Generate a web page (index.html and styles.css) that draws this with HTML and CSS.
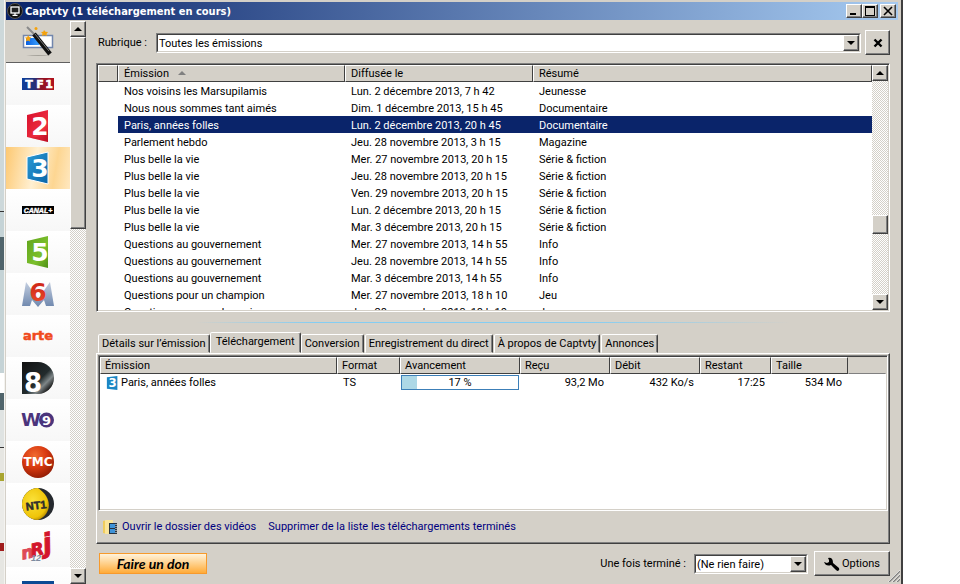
FILE: index.html
```html
<!DOCTYPE html>
<html lang="fr">
<head>
  <meta charset="UTF-8">
  <meta name="viewport" content="width=device-width, initial-scale=1.0">
  <title>Captvty</title>
  <link rel="stylesheet" href="styles.css">
</head>
<body>
  <div class="desktop"></div>
  <div class="window">
    <header class="titlebar">
      <svg class="app-icon" viewBox="0 0 16 16" width="16" height="16">
        <circle cx="8" cy="8" r="7.5" fill="#111" stroke="#555"/>
        <rect x="4" y="4" width="8" height="6" fill="#222" stroke="#fff" stroke-width="1.3"/>
        <path d="M8 10v2M5.5 12.3h5" stroke="#fff" stroke-width="1.3"/>
      </svg>
      <h1>Captvty (1 téléchargement en cours)</h1>
      <div class="win-buttons">
        <button type="button" aria-label="Réduire"><svg viewBox="0 0 12 10" width="12" height="10"><path d="M2 7h6v2H2z"/></svg></button>
        <button type="button" aria-label="Agrandir"><svg viewBox="0 0 12 10" width="12" height="10"><path d="M1 0h10v10H1zM2 2v7h8V2z" fill-rule="evenodd"/></svg></button>
        <button type="button" class="close" aria-label="Fermer"><svg viewBox="0 0 12 10" width="12" height="10"><path d="M2 1l8 8M10 1l-8 8" stroke="#000" stroke-width="1.6"/></svg></button>
      </div>
    </header>

    <div class="content">
      <nav class="sidebar">
        <div class="channels">
          <button type="button" class="channel tools" aria-label="Outils">
            <svg viewBox="0 0 34 32" width="34" height="32">
              <defs>
                <linearGradient id="wandBlue" x2="1"><stop offset="0" stop-color="#0a5fe0"/><stop offset="1" stop-color="#3aa0ff"/></linearGradient>
              </defs>
              <path d="M5 30q12-2 25 0z" fill="#a5a29a"/>
              <rect x="2.500" y="9.500" width="29" height="12" fill="#fff" stroke="#7286ad" stroke-width="1.500"/>
              <rect x="5" y="12" width="13" height="7" fill="url(#wandBlue)"/>
              <path d="M6 1l9 9" stroke="#8a8a8a" stroke-width="2"/>
              <path d="M13 8l16 20" stroke="#111" stroke-width="4.500"/>
              <path d="M14 8l14 17" stroke="#777" stroke-width="1"/>
              <g fill="#f5a20c">
                <circle cx="15" cy="2.500" r="1.500"/>
                <path d="M23 4l1.500 1.800L27 6l-1.500 2L26 10l-2.500-1-2.500 1 .5-2.500L20 6l2.300-.3z"/>
                <path d="M7 9l1.300 2 2 .5-1.500 1.500.2 2.500L7 14.500l-2 1 .3-2.500L4 11.500l2.200-.3z"/>
              </g>
            </svg>
          </button>
          <button type="button" class="channel" aria-label="TF1">
            <svg viewBox="0 0 32 32" width="32" height="32">
              <defs><linearGradient id="tf1" x2="1"><stop offset="0" stop-color="#0b3f9c"/><stop offset=".4" stop-color="#253078"/><stop offset=".6" stop-color="#8c1226"/><stop offset="1" stop-color="#b3121c"/></linearGradient></defs>
              <rect y="10" width="32" height="12" fill="url(#tf1)"/>
              <g class="logo-text heavy" font-size="11" fill="#fff" stroke="#fff" stroke-width=".6" text-anchor="middle">
                <text x="7" y="20">T</text><text x="18" y="20">F</text><text x="27" y="20">1</text>
              </g>
            </svg>
          </button>
          <button type="button" class="channel" aria-label="France 2">
            <svg viewBox="0 0 32 32" width="32" height="32">
              <defs><linearGradient id="f2" x2="1" y2="1"><stop offset="0" stop-color="#d80f2c"/><stop offset=".7" stop-color="#ee3040"/><stop offset="1" stop-color="#c00d24"/></linearGradient></defs>
              <path d="M5 5l21-5v32L5 27z" fill="url(#f2)"/>
              <path d="M5 27q10 3 21-7v12z" fill="#b80d24" opacity=".4"/>
              <text x="18" y="25" class="logo-text heavy" font-size="25" text-anchor="middle" fill="#fff">2</text>
            </svg>
          </button>
          <button type="button" class="channel active" aria-label="France 3">
            <svg viewBox="0 0 32 32" width="32" height="32">
              <defs><linearGradient id="f3" x2="1" y2="1"><stop offset="0" stop-color="#2a9bd6"/><stop offset="1" stop-color="#0a65a8"/></linearGradient></defs>
              <path d="M5 5l21-5v32L5 27z" fill="url(#f3)" stroke="#fff"/>
              <text x="18" y="25" class="logo-text heavy" font-size="25" text-anchor="middle" fill="#fff">3</text>
            </svg>
          </button>
          <button type="button" class="channel" aria-label="Canal+">
            <svg viewBox="0 0 32 32" width="32" height="32">
              <rect y="12" width="32" height="8" fill="#000"/>
              <text x="16" y="19" class="logo-text" font-size="7" font-style="italic" text-anchor="middle" fill="#fff" stroke="#fff" stroke-width=".4">CANAL+</text>
            </svg>
          </button>
          <button type="button" class="channel" aria-label="France 5">
            <svg viewBox="0 0 32 32" width="32" height="32">
              <defs><linearGradient id="f5" x2="1" y2="1"><stop offset="0" stop-color="#5fa31c"/><stop offset=".6" stop-color="#7cc02c"/><stop offset="1" stop-color="#4f9016"/></linearGradient></defs>
              <path d="M5 5l21-5v32L5 27z" fill="url(#f5)"/>
              <text x="18" y="25" class="logo-text heavy" font-size="25" text-anchor="middle" fill="#fff">5</text>
            </svg>
          </button>
          <button type="button" class="channel" aria-label="M6">
            <svg viewBox="0 0 32 32" width="32" height="32">
              <defs>
                <linearGradient id="m6" x2="0" y2="1"><stop offset="0" stop-color="#c3cee0"/><stop offset="1" stop-color="#6e87ad"/></linearGradient>
                <linearGradient id="m6red" x2="0" y2="1"><stop offset="0" stop-color="#c81e12"/><stop offset="1" stop-color="#f0502c"/></linearGradient>
              </defs>
              <path d="M4 4l12 17L28 4l4 24h-8l-2-6-6 7-6-7-2 6H0z" fill="url(#m6)"/>
              <text x="16" y="23" class="logo-text heavy" font-size="25" text-anchor="middle" fill="url(#m6red)">6</text>
            </svg>
          </button>
          <button type="button" class="channel" aria-label="Arte">
            <svg viewBox="0 0 32 32" width="32" height="32">
              <text x="16" y="20" class="logo-text heavy" font-size="13" text-anchor="middle" fill="#f04a1d" stroke="#f04a1d" stroke-width=".5">arte</text>
            </svg>
          </button>
          <button type="button" class="channel" aria-label="D8">
            <svg viewBox="0 0 32 32" width="32" height="32">
              <defs><linearGradient id="d8" x2="1" y2="1"><stop offset="0" stop-color="#111"/><stop offset=".55" stop-color="#222b2d"/><stop offset=".7" stop-color="#7e8688"/><stop offset=".85" stop-color="#1a1a1a"/></linearGradient></defs>
              <path d="M0 0h16a16 16 0 0 1 0 32H0z" fill="url(#d8)"/>
              <text x="11" y="30" class="logo-text heavy" font-size="26" text-anchor="middle" fill="#fff">8</text>
            </svg>
          </button>
          <button type="button" class="channel" aria-label="W9">
            <svg viewBox="0 0 32 32" width="32" height="32">
              <text x="9" y="22" class="logo-text heavy" font-size="18" text-anchor="middle" fill="#4b347c">W</text>
              <circle cx="24.500" cy="16" r="7.500" fill="#4b347c"/>
              <text x="24.500" y="21" class="logo-text heavy" font-size="13" text-anchor="middle" fill="#fff">9</text>
            </svg>
          </button>
          <button type="button" class="channel" aria-label="TMC">
            <svg viewBox="0 0 32 32" width="32" height="32">
              <defs><radialGradient id="tmc" cx=".4" cy=".3" r=".75"><stop offset="0" stop-color="#f06a30"/><stop offset=".5" stop-color="#d93a10"/><stop offset="1" stop-color="#8c1a04"/></radialGradient></defs>
              <circle cx="16" cy="16" r="16" fill="url(#tmc)"/>
              <text x="16" y="20" class="logo-text heavy" font-size="12" text-anchor="middle" fill="#fff">TMC</text>
            </svg>
          </button>
          <button type="button" class="channel" aria-label="NT1">
            <svg viewBox="0 0 32 32" width="32" height="32">
              <defs><radialGradient id="nt1" cx=".4" cy=".4" r=".65"><stop offset="0" stop-color="#fbe23a"/><stop offset=".8" stop-color="#efc408"/><stop offset="1" stop-color="#b88c00"/></radialGradient></defs>
              <circle cx="16" cy="16" r="16" fill="#25292e"/>
              <path d="M16 0a16 16 0 1 0 0 32c14-6 15-22 0-32z" fill="url(#nt1)"/>
              <text x="14" y="21" class="logo-text" font-size="11" text-anchor="middle" transform="rotate(-7 16 16)" fill="#2d2d2d" stroke="#2d2d2d" stroke-width=".5">NT1</text>
            </svg>
          </button>
          <button type="button" class="channel" aria-label="NRJ 12">
            <svg viewBox="0 0 32 32" width="32" height="32">
              <g class="logo-text heavy" fill="#d3162c" stroke="#d3162c" font-style="italic" transform="rotate(-12 16 16)">
                <text x="-2" y="26" font-size="17" fill="#de4a58" stroke="#de4a58">n</text>
                <text x="8" y="25" font-size="17">R</text>
                <text x="21" y="24" font-size="26">j</text>
              </g>
              <text x="9" y="31" class="logo-text" font-size="9" font-style="italic" fill="#7d8ba0">12</text>
            </svg>
          </button>
          <button type="button" class="channel" aria-label="Chaîne suivante">
            <svg viewBox="0 0 32 32" width="32" height="32"><rect y="9" width="32" height="14" fill="#0b4a94"/></svg>
          </button>
        </div>
        <div class="scrollbar">
          <button type="button" class="arrow up" aria-label="Monter"></button>
          <div class="thumb tall"></div>
          <div class="track"></div>
          <button type="button" class="arrow down" aria-label="Descendre"></button>
        </div>
      </nav>

      <main class="main">
        <div class="filter">
          <label for="rubrique">Rubrique :</label>
          <div class="combo grow">
            <select id="rubrique"><option>Toutes les émissions</option></select>
            <span class="combo-arrow"></span>
          </div>
          <button type="button" class="btn clear" aria-label="Effacer">
            <svg viewBox="0 0 10 10" width="10" height="10"><path d="M1.500 1.500l7 7M8.500 1.500l-7 7" stroke="#000" stroke-width="2.400"/></svg>
          </button>
        </div>

        <div class="list shows">
          <div class="list-view">
            <table>
              <colgroup><col class="c-mark"><col class="c-show"><col class="c-date"><col></colgroup>
              <thead>
                <tr><th></th><th>Émission <span class="sort"></span></th><th>Diffusée le</th><th>Résumé</th></tr>
              </thead>
              <tbody>
                <tr><td></td><td>Nos voisins les Marsupilamis</td><td>Lun. 2 décembre 2013, 7 h 42</td><td>Jeunesse</td></tr>
                <tr><td></td><td>Nous nous sommes tant aimés</td><td>Dim. 1 décembre 2013, 15 h 45</td><td>Documentaire</td></tr>
                <tr class="selected"><td></td><td>Paris, années folles</td><td>Lun. 2 décembre 2013, 20 h 45</td><td>Documentaire</td></tr>
                <tr><td></td><td>Parlement hebdo</td><td>Jeu. 28 novembre 2013, 3 h 15</td><td>Magazine</td></tr>
                <tr><td></td><td>Plus belle la vie</td><td>Mer. 27 novembre 2013, 20 h 15</td><td>Série &amp; fiction</td></tr>
                <tr><td></td><td>Plus belle la vie</td><td>Jeu. 28 novembre 2013, 20 h 15</td><td>Série &amp; fiction</td></tr>
                <tr><td></td><td>Plus belle la vie</td><td>Ven. 29 novembre 2013, 20 h 15</td><td>Série &amp; fiction</td></tr>
                <tr><td></td><td>Plus belle la vie</td><td>Lun. 2 décembre 2013, 20 h 15</td><td>Série &amp; fiction</td></tr>
                <tr><td></td><td>Plus belle la vie</td><td>Mar. 3 décembre 2013, 20 h 15</td><td>Série &amp; fiction</td></tr>
                <tr><td></td><td>Questions au gouvernement</td><td>Mer. 27 novembre 2013, 14 h 55</td><td>Info</td></tr>
                <tr><td></td><td>Questions au gouvernement</td><td>Jeu. 28 novembre 2013, 14 h 55</td><td>Info</td></tr>
                <tr><td></td><td>Questions au gouvernement</td><td>Mar. 3 décembre 2013, 14 h 55</td><td>Info</td></tr>
                <tr><td></td><td>Questions pour un champion</td><td>Mer. 27 novembre 2013, 18 h 10</td><td>Jeu</td></tr>
                <tr><td></td><td>Questions pour un champion</td><td>Jeu. 28 novembre 2013, 18 h 10</td><td>Jeu</td></tr>
              </tbody>
            </table>
          </div>
          <div class="scrollbar">
            <button type="button" class="arrow up" aria-label="Monter"></button>
            <div class="track before"></div>
            <div class="thumb"></div>
            <div class="track after"></div>
            <button type="button" class="arrow down" aria-label="Descendre"></button>
          </div>
        </div>

        <div class="splitter"></div>

        <div class="tabs" role="tablist">
          <button type="button" role="tab">Détails sur l’émission</button>
          <button type="button" role="tab" class="current" aria-selected="true">Téléchargement</button>
          <button type="button" role="tab">Conversion</button>
          <button type="button" role="tab">Enregistrement du direct</button>
          <button type="button" role="tab">À propos de Captvty</button>
          <button type="button" role="tab">Annonces</button>
        </div>

        <section class="panel">
          <div class="list downloads">
            <table>
              <colgroup><col class="d-name"><col class="d-format"><col class="d-progress"><col class="d-size"><col class="d-size"><col class="d-left"><col class="d-total"><col></colgroup>
              <thead>
                <tr><th>Émission</th><th>Format</th><th>Avancement</th><th>Reçu</th><th>Débit</th><th>Restant</th><th>Taille</th><th class="rest"></th></tr>
              </thead>
              <tbody>
                <tr>
                  <td>
                    <div class="show-name">
                      <svg viewBox="0 0 32 32" width="14" height="14"><path d="M2 3l24-3v32L2 29z" fill="#1b86c4"/><text x="15" y="26" class="logo-text heavy" font-size="27" text-anchor="middle" fill="#fff">3</text></svg>
                      Paris, années folles
                    </div>
                  </td>
                  <td>TS</td>
                  <td class="progress-cell"><div class="progress"><div class="bar" style="width: 13%"></div><span>17 %</span></div></td>
                  <td class="num">93,2 Mo</td>
                  <td class="num">432 Ko/s</td>
                  <td class="num">17:25</td>
                  <td class="num">534 Mo</td>
                  <td></td>
                </tr>
              </tbody>
            </table>
          </div>
          <div class="actions">
            <svg viewBox="0 0 16 16" width="16" height="16">
              <path d="M1 2l5-1v14l-5-1z" fill="#f0cc5c"/>
              <path d="M3 1h8v14H3z" fill="#fbe59a"/>
              <rect x="7" y="4" width="8" height="11" fill="#27333f"/>
              <path d="M8 5h5v4H8zM8 10h5v4H8z" fill="#3f93d8"/>
              <path d="M14 5v10" stroke="#fff" stroke-dasharray="1 1"/>
            </svg>
            <a href="#">Ouvrir le dossier des vidéos</a>
            <a href="#">Supprimer de la liste les téléchargements terminés</a>
          </div>
        </section>

        <footer class="footer">
          <button type="button" class="donate">Faire un don</button>
          <label for="after">Une fois terminé :</label>
          <div class="combo">
            <select id="after"><option>(Ne rien faire)</option></select>
            <span class="combo-arrow"></span>
          </div>
          <button type="button" class="btn options">
            <svg viewBox="0 0 16 14" width="16" height="14"><path d="M4 1q5-1 5 5l6 5q1 2-1 3-1 0-2-1L7 8Q2 10 0 5l3 1 2-1 0-2z"/></svg>
            Options
          </button>
        </footer>
        <svg class="grip" viewBox="0 0 12 12" width="12" height="12">
          <path d="M1 12L12 1M5 12l7-7M9 12l3-3" stroke="#808080" stroke-width="1.500"/>
          <path d="M0 12L12 0M4 12l8-8M8 12l4-4" stroke="#fff" stroke-width=".6"/>
        </svg>
      </main>
    </div>
  </div>
</body>
</html>
```

FILE: styles.css
```css
* {
  box-sizing: border-box;
  margin: 0;
  padding: 0;
}
body {
  display: flex;
  height: 100vh;
  padding-right: 57px;
  overflow: hidden;
  background-color: #fff;
  font-family: Roboto, "Liberation Sans", sans-serif;
  font-size: 11px;
  line-height: 17px;
  color: #000;
}
button, select {
  font: inherit;
  color: inherit;
}
.desktop {
  width: 4px;
  background: linear-gradient(#cdd8da 211px, #333 211px, #333 212px, #c5d3d6 212px, #c5d3d6 237px, #50646b 237px, #50646b 270px, #c5d3d6 270px, #c5d3d6 373px, #fff 373px, #fff 393px, #50646b 393px, #50646b 410px, #dfe3e2 410px, #dfe3e2 447px, #333 447px, #333 448px, #e6e6e2 448px, #e6e6e2 473px, #a9a530 473px, #a9a530 481px, #ebebe8 481px, #ebebe8 543px, #a01c1c 543px, #a01c1c 551px, #e6e6e2 551px);
}
.window {
  flex: 1;
  display: flex;
  flex-direction: column;
  min-width: 0;
  padding-top: 2px;
  background-color: #d4d0c8;
  border-left: 1px solid #f4f3f0;
  border-right: 2px solid #404040;
}

/* Title bar */
.titlebar {
  display: flex;
  align-items: center;
  height: 18px;
  margin: 0 3px 0 1px;
  padding: 0 2px 0 1px;
  background: linear-gradient(to right, #0a246a, #a6caf0);
  color: #fff;
}
.titlebar h1 {
  flex: 1;
  padding-left: 2px;
  font-family: "DejaVu Sans Condensed", "DejaVu Sans", sans-serif;
  font-size: 11px;
}
.win-buttons {
  display: flex;
}
.win-buttons button {
  display: flex;
  align-items: center;
  justify-content: center;
  width: 16px;
  height: 14px;
}
.win-buttons .close {
  margin-left: 2px;
}
.btn, .arrow, .thumb, .combo-arrow, .win-buttons button {
  background-color: #d4d0c8;
  border: 1px solid;
  border-color: #fff #404040 #404040 #fff;
  box-shadow: inset -1px -1px #808080;
}

.content {
  flex: 1;
  display: flex;
  min-height: 0;
  padding-top: 1px;
}

/* Channels */
.sidebar {
  display: flex;
  flex-shrink: 0;
  width: 81px;
  padding-left: 1px;
}
.channels {
  flex: 1;
  overflow: hidden;
}
.channel {
  display: flex;
  align-items: center;
  justify-content: center;
  width: 100%;
  height: 42px;
  border: none;
  background: linear-gradient(#fff, #f7f7f7);
}
.channel svg {
  overflow: visible;
}
.channel.tools {
  background: #d4d0c8;
  border-bottom: 1px solid #606060;
}
.channel.active {
  background: linear-gradient(100deg, #fdc871, #fff0d2 45%, #fdd692 75%, #ffe8c0);
}
.logo-text {
  font-family: "Liberation Sans", sans-serif;
  font-weight: bold;
}
.logo-text.heavy {
  font-family: "DejaVu Sans", sans-serif;
}

/* Scroll bars */
.scrollbar {
  display: flex;
  flex-direction: column;
  flex-shrink: 0;
  width: 16px;
}
.arrow {
  display: flex;
  align-items: center;
  justify-content: center;
  height: 16px;
}
.arrow::before, .combo-arrow::before {
  content: "";
  border: 4px solid transparent;
  border-bottom-width: 0;
  border-top-color: #000;
}
.arrow.up::before {
  border-width: 0 4px 4px;
  border-bottom-color: #000;
}
.thumb {
  height: 19px;
}
.thumb.tall {
  height: 192px;
}
.track {
  flex: 1;
  background: repeating-conic-gradient(#d4d0c8 0 25%, #fff 0 50%) 0 0 / 2px 2px;
}
.track.before {
  flex: 134;
}
.track.after {
  flex: 60;
}

/* Main area */
.main {
  position: relative;
  flex: 1;
  display: flex;
  flex-direction: column;
  min-width: 0;
  padding: 9px 11px 8px 10px;
}
.filter {
  display: flex;
  align-items: center;
  height: 25px;
  padding-left: 2px;
}
.filter label {
  width: 58px;
}
.combo {
  position: relative;
  width: 114px;
  height: 20px;
  border: 1px solid;
  border-color: #808080 #fff #fff #808080;
}
.combo.grow {
  flex: 1;
}
.combo select {
  display: block;
  width: 100%;
  height: 100%;
  padding-left: 1px;
  appearance: none;
  border: 1px solid;
  border-color: #404040 #d4d0c8 #d4d0c8 #404040;
  border-radius: 0;
  background-color: #fff;
}
.combo-arrow {
  position: absolute;
  top: 1px;
  right: 1px;
  bottom: 1px;
  display: flex;
  align-items: center;
  justify-content: center;
  width: 16px;
  pointer-events: none;
}
.btn {
  display: flex;
  align-items: center;
  justify-content: center;
}
.clear {
  width: 25px;
  height: 25px;
  margin-left: 4px;
}

.list {
  background-color: #fff;
  border: 1px solid;
  border-color: #808080 #fff #fff #808080;
  box-shadow: inset 1px 1px #404040, inset -1px -1px #d4d0c8;
  padding: 1px;
}
.shows {
  display: flex;
  height: 249px;
  margin-top: 8px;
}
.list-view {
  flex: 1;
  overflow: hidden;
}
table {
  width: 100%;
  table-layout: fixed;
  border-collapse: separate;
  border-spacing: 0;
}
th {
  height: 17px;
  padding: 0 5px;
  background-color: #d4d0c8;
  border: 1px solid;
  border-color: #fff #404040 #404040 #fff;
  font-weight: normal;
  line-height: 15px;
  text-align: left;
}
td {
  height: 17px;
  padding: 0 6px;
  white-space: nowrap;
}
.shows td {
  padding-top: 2px;
  line-height: 15px;
}
.selected td {
  background-color: #0a246a;
  color: #fff;
}
.selected td:first-child {
  background-color: #fff;
}
.c-mark { width: 20px; }
.c-show { width: 227px; }
.c-date { width: 188px; }
.sort {
  display: inline-block;
  margin-left: 6px;
  border: 4px solid transparent;
  border-top-width: 0;
  border-bottom-color: #808080;
  vertical-align: 2px;
}
.splitter {
  height: 1px;
  margin: 10px 100px 9px;
  background: linear-gradient(to right, transparent, #84cdf2 20%, #84cdf2 65%, transparent);
}

/* Tabs */
.tabs {
  display: flex;
  align-items: flex-end;
  height: 21px;
  padding-left: 2px;
}
.tabs button {
  height: 19px;
  margin-right: 1px;
  padding: 0 3px;
  background-color: #d4d0c8;
  border: 1px solid;
  border-color: #fff #404040 transparent #fff;
  border-radius: 2px 2px 0 0;
  box-shadow: inset -1px 0 #808080;
  white-space: nowrap;
}
.tabs button:first-child {
  margin-right: 0;
}
.tabs .current {
  height: 21px;
  margin-right: 0;
  padding: 0 5px 3px;
}
.panel {
  flex: 1;
  display: flex;
  flex-direction: column;
  min-height: 0;
  padding: 1px;
  border: 1px solid;
  border-color: #fff #404040 #404040 #fff;
  box-shadow: inset -1px -1px #808080;
}
.downloads {
  flex: 1;
}
.d-name { width: 237px; }
.d-format { width: 63px; }
.d-progress { width: 120px; }
.d-size { width: 90px; }
.d-left { width: 71px; }
.d-total { width: 77px; }
.downloads th {
  padding: 0 4px;
}
.downloads .rest {
  border-color: transparent transparent #808080;
}
.show-name {
  display: flex;
  align-items: center;
  gap: 1px;
}
.downloads .num {
  text-align: right;
}
.downloads .progress-cell {
  padding: 0 1px;
}
.progress {
  display: flex;
  position: relative;
  height: 15px;
  border: 1px solid #3c7fb8;
}
.progress .bar {
  background-color: #add8e6;
}
.progress span {
  position: absolute;
  inset: 0;
  line-height: 13px;
  text-align: center;
}
.actions {
  display: flex;
  align-items: center;
  height: 31px;
  padding-left: 4px;
}
.actions a {
  margin-left: 4px;
  margin-right: 8px;
  color: #000080;
  text-decoration: none;
}

/* Footer */
.footer {
  display: flex;
  align-items: center;
  height: 25px;
  margin-top: 7px;
  padding-left: 3px;
}
.donate {
  width: 108px;
  height: 21px;
  margin-right: auto;
  border: 1px solid #f79a2c;
  background: linear-gradient(#fff3dc, #ffd08a 50%, #ffab38);
  font-family: Lato, sans-serif;
  font-size: 14px;
  font-style: italic;
  font-weight: bold;
}
.footer label {
  margin-right: 8px;
}
.options {
  gap: 2px;
  width: 76px;
  height: 25px;
  margin-left: 6px;
}
.grip {
  position: absolute;
  right: 1px;
  bottom: 2px;
}
```
